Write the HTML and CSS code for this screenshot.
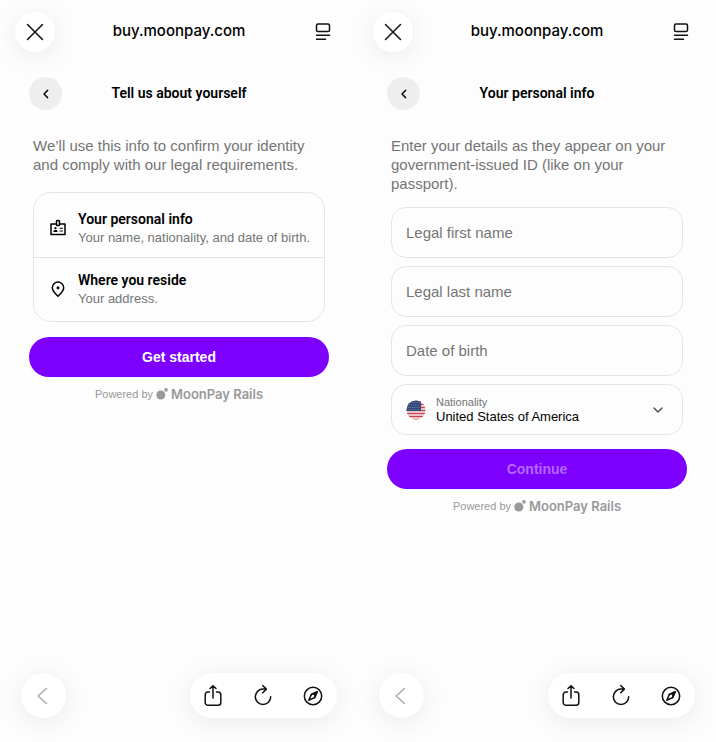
FILE: index.html
```
<!DOCTYPE html>
<html lang="en">
<head>
    <meta charset="UTF-8">
    <meta name="viewport" content="width=device-width, initial-scale=1.0">
    <title>MoonPay</title>
    <link rel="stylesheet" href="styles.css">
</head>
<body>
    <!-- shared icons -->
    <svg class="sprite" aria-hidden="true">
        <symbol id="icon-close" viewBox="0 0 18 18">
            <path d="M1.500 1.500l15 15M16.500 1.500l-15 15" />
        </symbol>
        <symbol id="icon-page" viewBox="0 0 18 18">
            <rect x="2.500" y="1" width="13" height="7.500" rx="1.600" />
            <path d="M2.500 12.200h13M2.500 16.200h9" />
        </symbol>
        <symbol id="icon-chevron" viewBox="0 0 10 10">
            <path d="M6.600 1.400L3 5l3.600 3.600" />
        </symbol>
        <symbol id="icon-back" viewBox="0 0 18 18">
            <path d="M11.500 1.500L3 9l8.500 7.500" />
        </symbol>
        <symbol id="icon-share" viewBox="0 0 22 24">
            <path d="M7.500 8H6a2.800 2.800 0 0 0-2.800 2.800v7.700A2.800 2.800 0 0 0 6 21.300h10a2.800 2.800 0 0 0 2.800-2.800v-7.700A2.800 2.800 0 0 0 16 8h-1.500M11 14V2M8 4.500L11 1.700l3 2.800" />
        </symbol>
        <symbol id="icon-reload" viewBox="0 0 22 24">
            <path d="M18.700 12.800a7.700 7.700 0 1 1-7.700-7.700h3.200M10.700 1.500L14.400 5.100l-3.700 3.700" />
        </symbol>
        <symbol id="icon-compass" viewBox="0 0 22 24">
            <circle cx="11" cy="12" r="8.700" />
            <path d="M15.200 7.800l-2.600 5.800-5.800 2.600 2.600-5.800z" />
            <path d="M15.200 7.800l-2.600 5.800-3.200-3.200z" fill="currentColor" />
            <circle cx="11" cy="12" r="1.200" fill="#fff" stroke="none" />
        </symbol>
        <symbol id="logo-moonpay" viewBox="0 0 12 12">
            <circle cx="4.800" cy="7" r="4.500" />
            <circle cx="10" cy="1.900" r="1.800" />
        </symbol>
    </svg>

    <div class="screens">
        <section class="screen">
            <header class="browser-bar">
                <button type="button" class="round-btn close-btn" aria-label="Close">
                    <svg class="icon-18"><use href="#icon-close" /></svg>
                </button>
                <span class="url">buy.moonpay.com</span>
                <button type="button" class="page-btn" aria-label="Page menu">
                    <svg class="icon-18"><use href="#icon-page" /></svg>
                </button>
            </header>

            <main class="content">
                <div class="title-row">
                    <button type="button" class="prev-btn" aria-label="Go back">
                        <svg class="icon-10"><use href="#icon-chevron" /></svg>
                    </button>
                    <h1>Tell us about yourself</h1>
                </div>
                <p class="intro">We’ll use this info to confirm your identity and comply with our legal requirements.</p>

                <ul class="steps">
                    <li>
                        <svg class="step-icon" viewBox="0 0 18 18">
                            <path d="M7 5H2v10.500h14V5h-5" />
                            <rect x="7.500" y="1.500" width="3" height="5" rx="0.800" />
                            <circle cx="6.500" cy="9.200" r="1.100" class="solid" />
                            <path d="M4.300 13c0-1.500 1-2.100 2.200-2.100s2.200.6 2.200 2.100z" class="solid" />
                            <path d="M11 9.300h2.500M11 12h2.500" class="thin" />
                        </svg>
                        <div>
                            <h2>Your personal info</h2>
                            <p>Your name, nationality, and date of birth.</p>
                        </div>
                    </li>
                    <li>
                        <svg class="step-icon" viewBox="0 0 18 18">
                            <path d="M9 16.200C5.500 13 3.300 10.400 3.300 7.700a5.700 5.700 0 0 1 11.400 0c0 2.700-2.200 5.300-5.700 8.500z" />
                            <circle cx="9" cy="7.700" r="1.500" class="solid" />
                        </svg>
                        <div>
                            <h2>Where you reside</h2>
                            <p>Your address.</p>
                        </div>
                    </li>
                </ul>

                <button type="button" class="primary-btn">Get started</button>
                <p class="powered">Powered by
                    <svg class="logo"><use href="#logo-moonpay" /></svg><strong>MoonPay Rails</strong>
                </p>
            </main>

            <footer class="toolbar">
                <button type="button" class="round-btn history-btn" aria-label="Back" disabled>
                    <svg class="icon-18"><use href="#icon-back" /></svg>
                </button>
                <div class="actions">
                    <button type="button" aria-label="Share"><svg><use href="#icon-share" /></svg></button>
                    <button type="button" aria-label="Reload"><svg><use href="#icon-reload" /></svg></button>
                    <button type="button" aria-label="Open in browser"><svg><use href="#icon-compass" /></svg></button>
                </div>
            </footer>
        </section>

        <section class="screen">
            <header class="browser-bar">
                <button type="button" class="round-btn close-btn" aria-label="Close">
                    <svg class="icon-18"><use href="#icon-close" /></svg>
                </button>
                <span class="url">buy.moonpay.com</span>
                <button type="button" class="page-btn" aria-label="Page menu">
                    <svg class="icon-18"><use href="#icon-page" /></svg>
                </button>
            </header>

            <main class="content">
                <div class="title-row">
                    <button type="button" class="prev-btn" aria-label="Go back">
                        <svg class="icon-10"><use href="#icon-chevron" /></svg>
                    </button>
                    <h1>Your personal info</h1>
                </div>
                <p class="intro">Enter your details as they appear on your government-issued ID (like on your passport).</p>

                <form class="details">
                    <input type="text" name="first_name" placeholder="Legal first name" aria-label="Legal first name">
                    <input type="text" name="last_name" placeholder="Legal last name" aria-label="Legal last name">
                    <input type="text" name="birth_date" placeholder="Date of birth" aria-label="Date of birth">
                    <div class="country">
                        <svg class="flag" viewBox="0 0 20 20">
                            <clipPath id="flag-round"><circle cx="10" cy="10" r="9.500" /></clipPath>
                            <g clip-path="url(#flag-round)">
                                <rect width="20" height="20" fill="#f3eef0" />
                                <path d="M0 1.500h20M0 4.500h20M0 7.500h20M0 10.500h20M0 13.500h20M0 16.500h20M0 19.500h20" stroke="#c8414f" stroke-width="1.500" />
                                <rect width="15" height="11" fill="#2f4678" />
                                <path d="M2 2.500h12M3 5h11M2 7.500h12M3 9.700h11" stroke="#8f9cbd" stroke-width="0.600" stroke-dasharray="0.600 1.600" />
                            </g>
                        </svg>
                        <div class="country-field">
                            <label for="nationality">Nationality</label>
                            <select id="nationality" name="nationality">
                                <option>United States of America</option>
                            </select>
                        </div>
                        <svg class="arrow" viewBox="0 0 12 12"><path d="M2 4l4 4 4-4" /></svg>
                    </div>
                    <button type="submit" class="primary-btn" disabled>Continue</button>
                </form>
                <p class="powered">Powered by
                    <svg class="logo"><use href="#logo-moonpay" /></svg><strong>MoonPay Rails</strong>
                </p>
            </main>

            <footer class="toolbar">
                <button type="button" class="round-btn history-btn" aria-label="Back" disabled>
                    <svg class="icon-18"><use href="#icon-back" /></svg>
                </button>
                <div class="actions">
                    <button type="button" aria-label="Share"><svg><use href="#icon-share" /></svg></button>
                    <button type="button" aria-label="Reload"><svg><use href="#icon-reload" /></svg></button>
                    <button type="button" aria-label="Open in browser"><svg><use href="#icon-compass" /></svg></button>
                </div>
            </footer>
        </section>
    </div>
</body>
</html>
```
FILE: styles.css
```
* {
    box-sizing: border-box;
}
body {
    margin: 0;
    background-color: #fdfdfd;
    color: #000;
    font-family: "Liberation Sans", Arial, sans-serif;
}
h1, h2, p, ul {
    margin: 0;
    padding: 0;
}
button {
    padding: 0;
    border: none;
    background: none;
    color: #111;
    font-family: inherit;
    cursor: pointer;
}
button:disabled {
    cursor: default;
}
svg {
    display: block;
    flex: none;
    fill: none;
    stroke: currentColor;
    stroke-width: 1.5;
    stroke-linecap: round;
    stroke-linejoin: round;
}
.sprite {
    display: none;
}
.screens {
    display: grid;
    grid-template-columns: 1fr 1fr;
    min-height: 100vh;
}
.screen {
    display: flex;
    flex-direction: column;
    overflow: hidden;
}

/* browser chrome */
.browser-bar {
    display: grid;
    grid-template-columns: 40px 1fr 40px;
    align-items: center;
    padding: 12px 15px 0;
}
.round-btn {
    display: flex;
    align-items: center;
    justify-content: center;
    border-radius: 50%;
    background-color: #fff;
    box-shadow: 0 4px 24px rgba(0, 0, 0, 0.08);
}
.close-btn {
    width: 40px;
    height: 40px;
}
.icon-18 {
    width: 18px;
    height: 18px;
}
.icon-10 {
    width: 10px;
    height: 10px;
}
.url {
    padding-bottom: 2px;
    font-family: Inter, sans-serif;
    font-size: 15px;
    font-weight: 500;
    line-height: 20px;
    text-align: center;
}
.page-btn {
    display: flex;
    justify-content: center;
}

/* page content */
.content {
    flex: 1;
    padding: 25px 29px;
}
.title-row {
    display: grid;
    grid-template-columns: 33px 1fr 33px;
    align-items: center;
}
.prev-btn {
    display: flex;
    align-items: center;
    justify-content: center;
    width: 33px;
    height: 33px;
    border-radius: 50%;
    background-color: #eee;
}
h1,
h2 {
    font-family: Roboto, sans-serif;
    font-size: 14px;
    font-weight: 600;
    line-height: 19px;
}
h1 {
    text-align: center;
}
.intro {
    padding: 26px 4px 0;
    color: #757575;
    font-size: 15px;
    line-height: 19px;
}
.steps {
    margin: 18px 4px 15px;
    border: 1px solid #e5e5e5;
    border-radius: 18px;
    list-style: none;
}
.steps li {
    display: flex;
    align-items: center;
    gap: 11px;
    height: 64px;
    padding: 6px 8px 0 15px;
}
.steps li + li {
    border-top: 1px solid #e5e5e5;
    padding: 0 8px 2px 15px;
}
.step-icon {
    width: 18px;
    height: 18px;
}
.step-icon .solid {
    fill: currentColor;
    stroke: none;
}
.step-icon .thin {
    stroke-width: 1;
}
.steps p {
    color: #757575;
    font-size: 13px;
    line-height: 17px;
}
.primary-btn {
    width: 100%;
    height: 40px;
    border-radius: 20px;
    background-color: #7d00ff;
    color: #fff;
    font-size: 14px;
    font-weight: bold;
}
.primary-btn:disabled {
    color: #b567ff;
}
.powered {
    display: flex;
    align-items: center;
    justify-content: center;
    gap: 3px;
    padding-top: 9px;
    color: #999;
    font-size: 11px;
    line-height: 16px;
}
.logo {
    width: 12px;
    height: 12px;
    fill: #999;
    stroke: none;
}
.powered strong {
    font-family: Inter, sans-serif;
    font-size: 13px;
    font-weight: 600;
}

/* form */
.details {
    display: flex;
    flex-direction: column;
    gap: 8px;
    padding-top: 14px;
}
.details input,
.country {
    height: 51px;
    margin: 0 4px;
    padding: 0 14px;
    border: 1px solid #e5e5e5;
    border-radius: 15px;
    background: none;
}
.details input {
    color: #000;
    font-family: inherit;
    font-size: 15px;
}
.details input::placeholder {
    color: #757575;
    opacity: 1;
}
.country {
    display: flex;
    align-items: center;
    gap: 10px;
}
.flag {
    width: 20px;
    height: 20px;
    stroke: none;
}
.country-field {
    flex: 1;
}
.country-field label {
    display: block;
    color: #757575;
    font-size: 11px;
    line-height: 14px;
}
.country-field select {
    display: block;
    width: 100%;
    padding: 0;
    border: none;
    appearance: none;
    background: none;
    color: #000;
    font-family: inherit;
    font-size: 13px;
    line-height: 16px;
}
.arrow {
    width: 12px;
    height: 12px;
    margin-right: 4px;
    color: #555;
}
.details .primary-btn {
    margin-top: 6px;
}

/* bottom toolbar */
.toolbar {
    display: flex;
    align-items: center;
    justify-content: space-between;
    padding: 0 21px 24px;
}
.history-btn {
    width: 45px;
    height: 45px;
    color: #aaa;
}
.actions {
    display: flex;
    align-items: center;
    gap: 28px;
    padding: 0 13px 0 12px;
    height: 45px;
    border-radius: 23px;
    background-color: #fff;
    box-shadow: 0 4px 24px rgba(0, 0, 0, 0.08);
}
.actions svg {
    width: 22px;
    height: 24px;
}
```
